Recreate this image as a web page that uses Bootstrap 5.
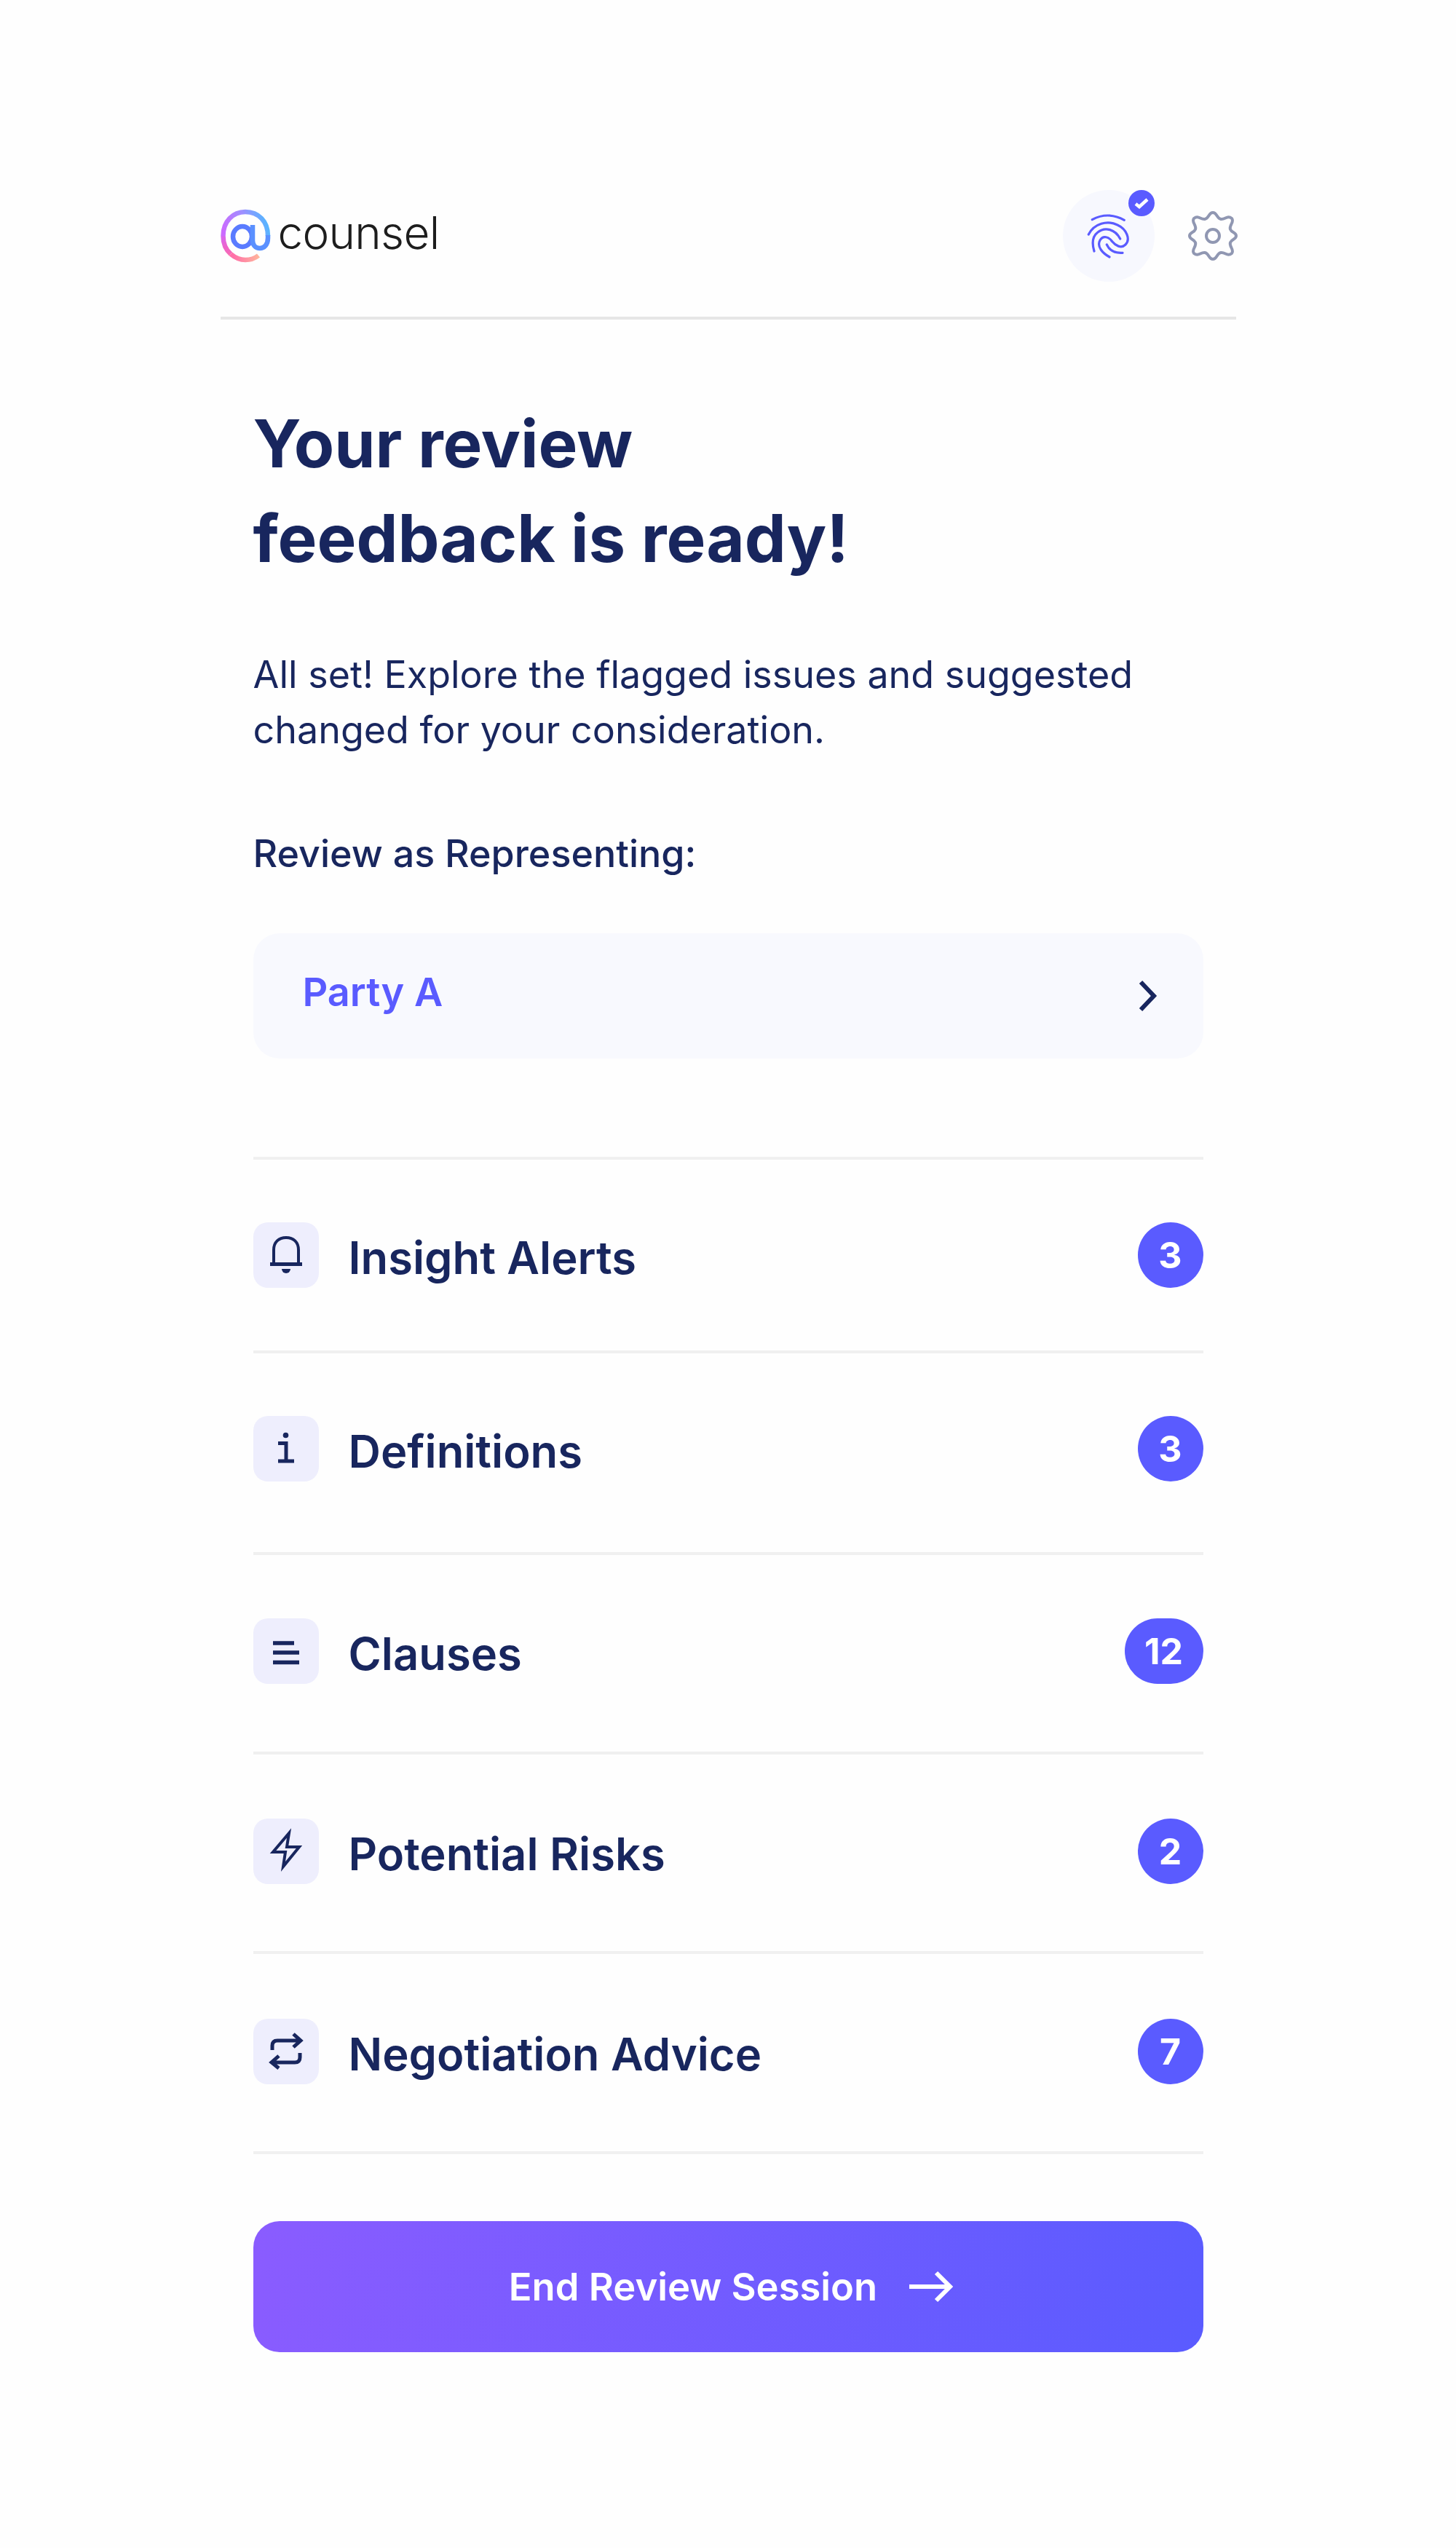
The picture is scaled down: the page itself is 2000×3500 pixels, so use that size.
<!DOCTYPE html>
<html lang="en">
<head>
<meta charset="utf-8">
<title>Counsel review</title>
<link href="https://cdn.jsdelivr.net/npm/bootstrap@5.3.0/dist/css/bootstrap.min.css" rel="stylesheet">
<style>
body{background:#fefefe;font-family:"Inter","Liberation Sans",sans-serif;color:#18265e}
.shell{width:1395px;margin:0 auto;padding-top:261px}
.topbar{height:178px;border-bottom:4px solid #e6e6e6}
.logoart{margin-top:27px}
.wordmark{font-size:62px;font-weight:350;letter-spacing:-.7px;color:#1d1d1d;line-height:62px;margin-left:7px;margin-top:28px}
.fp-wrap{width:126px;height:126px;background:#f7f8fe;margin-right:46px}
.fp-check{top:0;right:0;width:36px;height:36px;background:#5a5bff}
.gearart{margin-top:29px;margin-right:-2px}
.inner{padding:0 45px}
.title{font-size:90.5px;line-height:130px;font-weight:700;margin:105px 0 0;color:#18265e}
.intro{font-size:52px;line-height:76px;font-weight:400;margin:85px 0 0}
.rep{font-size:52px;line-height:76px;font-weight:500;margin:94px 0 0}
.picker{height:172px;margin-top:71px;background:#f8f9fe;border-radius:36px;padding:0 64px 0 68px;color:#5a5bff;font-size:54px;font-weight:600}
.pickerlabel{margin-bottom:12px}
.rows{margin-top:135px;border-top:4px solid #f0f0f0}
.rows .rowitem,.rows .rowitem:last-child{border-width:0 0 4px;border-style:solid;border-color:#f0f0f0;background:transparent;border-radius:0}
.tile{width:90px;height:90px;background:#eeeefd;border-radius:20px;margin-right:41px;flex:none}
.rowname{font-size:61.5px;font-weight:600;color:#18265e;line-height:90px;margin-top:4px;margin-bottom:2px}
.count{width:90px;height:90px;padding:0;font-size:50px;font-weight:700;background:#5a5bff!important;display:flex;align-items:center;justify-content:center;color:#fff}
.rows .countwide{width:108px}
.rows .r1{padding-top:86px;padding-bottom:80px}
.rows .r2{padding-top:86px;padding-bottom:91px}
.rows .r3{padding-top:87px;padding-bottom:87px}
.rows .r4{padding-top:88px;padding-bottom:86px}
.rows .r5{padding-top:89px;padding-bottom:86px}
.endbtn{height:180px;width:100%;margin-top:92px;padding-left:20px;border-radius:36px;border:0;color:#fff;font-size:52.5px;font-weight:600;background:linear-gradient(100deg,#8a5cff 0%,#5a5bff 100%)}
.endbtn:hover{color:#fff}
.endarrow{margin-left:44px}
svg{display:block;overflow:visible}
</style>
</head>
<body>
<div class="shell">
  <header class="topbar d-flex justify-content-between align-items-start">
    <div class="d-flex align-items-start">
      <svg class="logoart" width="72" height="76" viewBox="0 0 72 76" fill="none" stroke-width="6.5">
        <defs>
          <linearGradient id="g1" gradientUnits="userSpaceOnUse" x1="3" y1="30" x2="65" y2="12"><stop offset="0" stop-color="#cc6aff"/><stop offset=".5" stop-color="#a08eff"/><stop offset="1" stop-color="#4fb8ff"/></linearGradient>
          <linearGradient id="g2" gradientUnits="userSpaceOnUse" x1="3" y1="30" x2="20" y2="66"><stop offset="0" stop-color="#cf68ff"/><stop offset=".55" stop-color="#ee64c8"/><stop offset="1" stop-color="#ff70a8"/></linearGradient>
          <linearGradient id="g3" gradientUnits="userSpaceOnUse" x1="18" y1="66" x2="54" y2="66"><stop offset="0" stop-color="#ff70a8"/><stop offset="1" stop-color="#ffb89c"/></linearGradient>
        </defs>
        <path d="M3.5 36 C3.5 16 17 3 34 3 C52 3 65 16 65 36" stroke="url(#g1)"/>
        <path d="M3.5 36 C3.5 46 7 55 14 61" stroke="url(#g2)"/>
        <path d="M14 61 C20 66 27 69 34 69 C41 69 47 67 52 63" stroke="url(#g3)"/>
        <ellipse cx="30" cy="37" rx="13" ry="14" stroke="#5a7bff"/>
        <path d="M65 35 V39 C65 48 60 53 54 53 C48 53 44 49 44 42 V21" stroke="#5a90ff"/>
      </svg>
      <span class="wordmark">counsel</span>
    </div>
    <div class="d-flex align-items-start">
      <div class="fp-wrap rounded-circle position-relative d-flex align-items-center justify-content-center">
        <svg width="70" height="70" viewBox="0 0 70 70" fill="none" stroke="#5a5bff" stroke-width="3.2" stroke-linecap="round">
          <path d="M12.3 12.7 Q34 1 56.3 13.3"/>
          <path d="M7.3 33 C15 18 33 13 47 20 C60 26 65 40 58 47 C52 53 44 48 40 43 C35 36 27 34 23 41 C18 50 27 59 36 64"/>
          <path d="M15 56 C12 46 12 36 20 30 C30 22 44 26 50.7 39"/>
          <path d="M32.3 47 C36 55 44 59 54 58.3"/>
        </svg>
        <span class="fp-check position-absolute rounded-circle d-flex align-items-center justify-content-center">
          <svg width="20" height="16" viewBox="0 0 20 16" fill="none" stroke="#fff" stroke-width="4.5"><path d="M2 9 L7 13 L18 3"/></svg>
        </span>
      </div>
      <svg class="gearart" width="68" height="68" viewBox="0 0 68 68" fill="none" stroke="#9097b2" stroke-width="4">
        <path d="M34 2 C40 2 39 10 45 11 C51 12 54 5 60 10 C64 15 56 19 58 25 C60 30 66 29 66 34 C66 39 60 38 58 43 C56 49 64 53 60 58 C54 63 51 56 45 57 C39 58 40 66 34 66 C28 66 29 58 23 57 C17 56 14 63 8 58 C4 53 12 49 10 43 C8 38 2 39 2 34 C2 29 8 30 10 25 C12 19 4 15 8 10 C14 5 17 12 23 11 C29 10 28 2 34 2 Z"/>
        <circle cx="34" cy="34" r="9"/>
      </svg>
    </div>
  </header>
  <main class="inner">
    <h1 class="title">Your review<br>feedback is ready!</h1>
    <p class="intro">All set! Explore the flagged issues and suggested<br>changed for your consideration.</p>
    <p class="rep">Review as Representing:</p>
    <div class="picker d-flex justify-content-between align-items-center">
      <span class="pickerlabel">Party A</span>
      <svg width="26" height="44" viewBox="0 0 26 44" fill="none" stroke="#18265e" stroke-width="6"><path d="M4 3 L22 22 L4 41"/></svg>
    </div>
    <div class="rows list-group list-group-flush">
      <div class="rowitem r1 list-group-item d-flex align-items-start px-0">
        <span class="tile d-block"><svg width="90" height="90" viewBox="0 0 90 90" fill="none" stroke="#18265e" stroke-width="4"><path d="M28 56 V38 C28 27 35 21 45 21 C55 21 62 27 62 38 V56"/><path d="M23 57.5 H67" stroke-width="5"/><path d="M39 64 H51 A6 6 0 0 1 39 64 Z" fill="#18265e" stroke="none"/></svg></span>
        <span class="rowname flex-grow-1">Insight Alerts</span>
        <span class="count badge rounded-pill">3</span>
      </div>
      <div class="rowitem r2 list-group-item d-flex align-items-start px-0">
        <span class="tile d-block"><svg width="90" height="90" viewBox="0 0 90 90" fill="none" stroke="#18265e" stroke-width="5"><circle cx="44.5" cy="26.5" r="3.8" fill="#18265e" stroke="none"/><path d="M34 37.5 H45 V62 M34 62 H56"/></svg></span>
        <span class="rowname flex-grow-1">Definitions</span>
        <span class="count badge rounded-pill">3</span>
      </div>
      <div class="rowitem r3 list-group-item d-flex align-items-start px-0">
        <span class="tile d-block"><svg width="90" height="90" viewBox="0 0 90 90" fill="none" stroke="#18265e" stroke-width="5.5"><path d="M27 34 H56 M27 47 H63 M27 60.5 H63"/></svg></span>
        <span class="rowname flex-grow-1">Clauses</span>
        <span class="count countwide badge rounded-pill">12</span>
      </div>
      <div class="rowitem r4 list-group-item d-flex align-items-start px-0">
        <span class="tile d-block"><svg width="90" height="90" viewBox="0 0 90 90" fill="none" stroke="#18265e" stroke-width="4"><path d="M49 20 L27 46 H44 L41 66 L63 39 H46 Z"/></svg></span>
        <span class="rowname flex-grow-1">Potential Risks</span>
        <span class="count badge rounded-pill">2</span>
      </div>
      <div class="rowitem r5 list-group-item d-flex align-items-start px-0">
        <span class="tile d-block"><svg width="90" height="90" viewBox="0 0 90 90" fill="none" stroke="#18265e" stroke-width="5"><path d="M26 43 V37 C26 32 29 30 33 30 H64 M55 21 L65 30 L55 39"/><path d="M64 47 V53 C64 58 61 60 57 60 H26 M35 51 L25 60 L35 68"/></svg></span>
        <span class="rowname flex-grow-1">Negotiation Advice</span>
        <span class="count badge rounded-pill">7</span>
      </div>
    </div>
    <button class="endbtn btn d-flex align-items-center justify-content-center" type="button">
      End Review Session
      <svg class="endarrow" width="60" height="44" viewBox="0 0 60 44" fill="none" stroke="#fff" stroke-width="6"><path d="M0 22 H56 M37 3 L56 22 L37 41"/></svg>
    </button>
  </main>
</div>
<script src="https://cdn.jsdelivr.net/npm/bootstrap@5.3.0/dist/js/bootstrap.bundle.min.js"></script>
</body>
</html>
